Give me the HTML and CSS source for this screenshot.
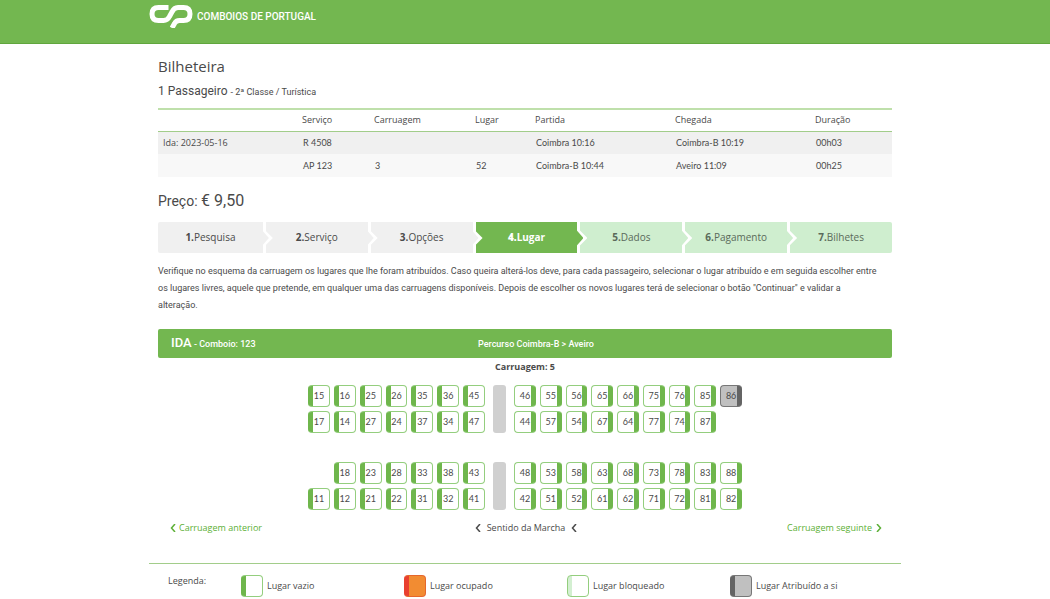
FILE: index.html
```html
<!DOCTYPE html>
<html lang="pt">
<head>
<meta charset="utf-8">
<title>Bilheteira - Comboios de Portugal</title>
<link rel="stylesheet" href="styles.css">
</head>
<body>
<header class="topbar">
  <div class="wrap topbar-inner">
    <svg class="logo" viewBox="0 0 44 24" aria-hidden="true"><path d="M19.500 3.500H9.500C5 3.500 3 6 3 10S5 16.500 9.500 16.500H14.500C17.500 16.500 19 15.500 20.500 12.500L23 8C24.500 4.500 26 3.500 29 3.500H34.500C39 3.500 41 6 41 10S39 16.500 34.500 16.500H30.500C27.500 16.500 26.500 17.500 25.500 19.500L23 24"/></svg>
    <span class="brand">COMBOIOS DE PORTUGAL</span>
  </div>
</header>
<main class="wrap">
  <div class="content">
    <h1 class="title">Bilheteira</h1>
    <p class="passenger">1 Passageiro <small>- 2ª Classe / Turística</small></p>
    <table class="trips">
      <colgroup><col class="c-day"><col class="c-service"><col class="c-coach"><col class="c-seat"><col class="c-from"><col class="c-to"><col class="c-time"></colgroup>
      <thead><tr><th></th><th>Serviço</th><th>Carruagem</th><th>Lugar</th><th>Partida</th><th>Chegada</th><th>Duração</th></tr></thead>
      <tbody>
        <tr><td class="day">Ida: 2023-05-16</td><td>R 4508</td><td></td><td></td><td>Coimbra 10:16</td><td>Coimbra-B 10:19</td><td>00h03</td></tr>
        <tr><td></td><td>AP 123</td><td>3</td><td>52</td><td>Coimbra-B 10:44</td><td>Aveiro 11:09</td><td>00h25</td></tr>
      </tbody>
    </table>
    <p class="price">Preço: <span>€ 9,50</span></p>
    <ol class="steps">
      <li class="step"><b>1.</b>Pesquisa</li>
      <li class="step"><b>2.</b>Serviço</li>
      <li class="step"><b>3.</b>Opções</li>
      <li class="step current"><b>4.</b>Lugar</li>
      <li class="step next"><b>5.</b>Dados</li>
      <li class="step next"><b>6.</b>Pagamento</li>
      <li class="step next"><b>7.</b>Bilhetes</li>
    </ol>
    <p class="help">Verifique no esquema da carruagem os lugares que lhe foram atribuídos. Caso queira alterá-los deve, para cada passageiro, selecionar o lugar atribuído e em seguida escolher entre os lugares livres, aquele que pretende, em qualquer uma das carruagens disponíveis. Depois de escolher os novos lugares terá de selecionar o botão "Continuar" e validar a alteração.</p>
    <div class="route">
      <span class="route-train"><strong>IDA</strong> - Comboio: 123</span>
      <span class="route-path">Percurso Coimbra-B &gt; Aveiro</span>
    </div>
    <h2 class="coach">Carruagem: 5</h2>
    <div class="map">
      <div class="seats left">
        <button class="seat">15</button><button class="seat">16</button><button class="seat">25</button><button class="seat">26</button><button class="seat">35</button><button class="seat">36</button><button class="seat">45</button>
        <button class="seat">17</button><button class="seat">14</button><button class="seat">27</button><button class="seat">24</button><button class="seat">37</button><button class="seat">34</button><button class="seat">47</button>
      </div>
      <div class="divider"></div>
      <div class="seats right">
        <button class="seat">46</button><button class="seat">55</button><button class="seat">56</button><button class="seat">65</button><button class="seat">66</button><button class="seat">75</button><button class="seat">76</button><button class="seat">85</button><button class="seat mine">86</button>
        <button class="seat">44</button><button class="seat">57</button><button class="seat">54</button><button class="seat">67</button><button class="seat">64</button><button class="seat">77</button><button class="seat">74</button><button class="seat">87</button>
      </div>
      <div class="seats left">
        <span></span><button class="seat">18</button><button class="seat">23</button><button class="seat">28</button><button class="seat">33</button><button class="seat">38</button><button class="seat">43</button>
        <button class="seat">11</button><button class="seat">12</button><button class="seat">21</button><button class="seat">22</button><button class="seat">31</button><button class="seat">32</button><button class="seat">41</button>
      </div>
      <div class="divider"></div>
      <div class="seats right">
        <button class="seat">48</button><button class="seat">53</button><button class="seat">58</button><button class="seat">63</button><button class="seat">68</button><button class="seat">73</button><button class="seat">78</button><button class="seat">83</button><button class="seat">88</button>
        <button class="seat">42</button><button class="seat">51</button><button class="seat">52</button><button class="seat">61</button><button class="seat">62</button><button class="seat">71</button><button class="seat">72</button><button class="seat">81</button><button class="seat">82</button>
      </div>
    </div>
    <nav class="coach-nav">
      <a href="#"><svg class="chev" viewBox="0 0 6 8"><path d="M5 0L1.500 4L5 8"/></svg>Carruagem anterior</a>
      <span class="direction"><svg class="chev" viewBox="0 0 6 8"><path d="M5 0L1.500 4L5 8"/></svg>Sentido da Marcha<svg class="chev" viewBox="0 0 6 8"><path d="M5 0L1.500 4L5 8"/></svg></span>
      <a class="following" href="#">Carruagem seguinte<svg class="chev" viewBox="0 0 6 8"><path d="M1 0L4.500 4L1 8"/></svg></a>
    </nav>
  </div>
  <section class="legend">
    <span class="legend-title">Legenda:</span>
    <ul class="legend-list">
      <li><i class="seat"></i>Lugar vazio</li>
      <li><i class="seat taken"></i>Lugar ocupado</li>
      <li><i class="seat blocked"></i>Lugar bloqueado</li>
      <li><i class="seat mine"></i>Lugar Atribuído a si</li>
    </ul>
  </section>
</main>
</body>
</html>
```
FILE: styles.css
```css
* { box-sizing: border-box; }
body { margin: 0; background: #fff; color: #4a4a4a; font: 9px/16px "Open Sans", "Noto Sans", sans-serif; }
h1, h2, p, ol, ul { margin: 0; padding: 0; font-weight: 400; list-style: none; }
.wrap { max-width: 752px; margin: 0 auto; }
.topbar { background: #73b750; border-bottom: 1px solid #60a63d; }
.topbar-inner { display: flex; align-items: flex-start; gap: 4px; height: 43px; padding-top: 4px; color: #fff; }
.logo { width: 44px; height: 24px; fill: none; stroke: #fff; stroke-width: 5; }
.brand { font: 500 10px/26px Roboto, sans-serif; }
.content { padding: 0 9px; }
.title { padding-top: 11px; font-size: 15px; line-height: 22px; }
.passenger { margin-top: 4px; font: 12px/20px Roboto, sans-serif; }
.passenger small { font-size: 9px; }
.trips { width: 100%; margin-top: 6px; border-top: 2px solid #bfe0ab; border-collapse: collapse; table-layout: fixed; }
.trips th { height: 22px; padding: 0; border-bottom: 1px solid #a2cd8a; font-weight: 400; text-align: left; }
.trips td { height: 23px; padding: 0 0 0 1px; font-family: Lato, sans-serif; }
.trips .day { padding-left: 5px; font-family: "Open Sans", sans-serif; }
.trips tbody tr { background: #f8f8f8; }
.trips tbody tr:first-child { background: #f0f0f0; }
.c-day { width: 144px; }
.c-service { width: 72px; }
.c-coach { width: 101px; }
.c-seat { width: 60px; }
.c-from, .c-to { width: 140px; }
.price { margin-top: 13px; font: 14px/22px Roboto, sans-serif; }
.price span { font-size: 16px; }
.steps { display: grid; grid-template-columns: 105fr repeat(6, 102fr); gap: 3px; margin-top: 10px; }
.step { --fill: #f0f0f0; position: relative; padding: 0 0 1px; background: var(--fill); font-size: 10px; line-height: 30px; text-align: center; }
.step:first-child { border-radius: 2px 0 0 2px; }
.step:last-child { border-radius: 0 2px 2px 0; }
.step.current { --fill: #73b750; color: #fff; font-weight: 700; }
.step.next { --fill: #cfeecf; color: #5a6a5a; }
.step:not(:last-child)::before, .step:not(:last-child)::after { content: ""; position: absolute; z-index: 1; left: 100%; top: 6px; width: 10px; height: 20px; background: #fff; clip-path: polygon(0 0, 100% 50%, 0 100%); }
.step:not(:last-child)::after { left: calc(100% - 1px); top: 8px; width: 7px; height: 16px; background: var(--fill); }
.help { margin-top: 10px; padding-right: 13px; font: 9px/17px Roboto, sans-serif; }
.route { display: grid; grid-template-columns: 1fr auto 1fr; align-items: center; height: 29px; margin-top: 15px; padding: 0 13px; border-radius: 2px; background: #73b750; color: #fff; font: 500 9px/16px Roboto, sans-serif; }
.route-path { margin-left: 22px; }
.route strong { font-size: 13px; font-weight: 500; }
.coach { font-size: 9px; font-weight: 700; line-height: 17px; text-align: center; }
.map { display: grid; grid-template-columns: 177px 13px 228px; gap: 29px 8px; justify-content: center; margin-top: 10px; }
.seats { display: grid; grid-template-columns: repeat(7, 1fr); grid-auto-rows: 22px; gap: 4px; }
.seats.right { grid-template-columns: repeat(9, 1fr); }
.divider { border-radius: 3px; background: #d0d0d0; }
.seat { --band: #6fb64c; --base: #fff; --edge: #94ce7e; --side: right; min-width: 0; height: 22px; padding: 0; border: 1px solid var(--edge); border-radius: 4px; background: linear-gradient(to var(--side), var(--band) 5px, var(--base) 5px) border-box; color: #4a4a4a; font: 9px/20px Lato, sans-serif; text-align: center; }
.left .seat, .legend .seat { border-left-color: var(--band); }
.right .seat { --side: left; border-right-color: var(--band); }
.seat.mine { --band: #646464; --base: #c0c0c0; --edge: #777; }
.seat.taken { --band: #e9402f; --base: #f28c32; --edge: #e5672c; }
.seat.blocked { --band: #d3efd1; --edge: #94ce7e; }
.legend .seat.blocked { border-left-color: var(--edge); }
.coach-nav { display: grid; grid-template-columns: 1fr auto 1fr; align-items: center; margin-top: 10px; padding: 0 10px 0 12px; }
.coach-nav a { display: flex; align-items: center; gap: 3px; color: #5caf36; text-decoration: none; }
.coach-nav .following { justify-content: flex-end; gap: 4px; }
.direction { display: flex; align-items: center; gap: 6px; }
.chev { width: 6px; height: 8px; fill: none; stroke: currentColor; stroke-width: 1.5; }
.legend { display: flex; margin-top: 27px; padding: 9px 0 0 19px; border-top: 1px solid #a2cd8a; }
.legend-title { flex: 0 0 73px; }
.legend-list { display: grid; flex: 1; grid-template-columns: repeat(4, 163px); padding-top: 2px; }
.legend-list li { display: flex; align-items: center; gap: 4px; }
.legend .seat { width: 22px; }
```
